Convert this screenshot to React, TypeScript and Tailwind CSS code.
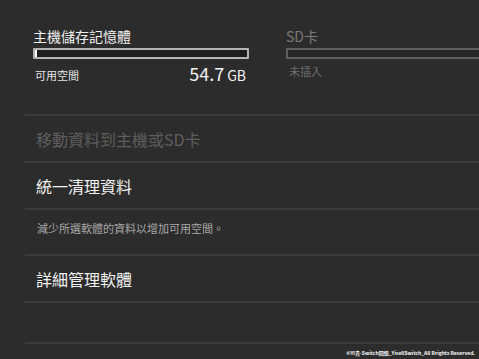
import React from 'react';

const font = '"Noto Sans CJK TC", "Noto Sans", "Liberation Sans", sans-serif';

function StorageRow({ label, dim, children }: { label: string; dim?: boolean; children?: React.ReactNode }) {
  return (
    <div className="border-t-2 border-[#3c3c3c]">
      <div className="h-[45px] flex items-center pl-[11px]">
        <span className={`text-[16px] leading-none ${dim ? 'text-[#5e5e5e]' : 'text-[#f2f2f2]'}`}>{label}</span>
      </div>
      {children}
    </div>
  );
}

export default function App() {
  return (
    <div
      className="relative w-[479px] h-[359px] overflow-hidden bg-[#2c2c2c]"
      style={{ fontFamily: font }}
    >
      {/* storage summary */}
      <div className="flex pt-[27px] h-[114px]">
        <div className="ml-[33px] w-[216px]">
          <div className="text-[14px] leading-[18px] text-[#f0f0f0]">主機儲存記憶體</div>
          <div className="mt-[3px] h-[11px] border-2 border-[#b4b4b4] rounded-[1px] bg-[#1e1e1e] flex">
            <div className="w-[2px] bg-white" />
          </div>
          <div className="mt-[5px] flex items-end justify-between pl-[2px] pr-[3px]">
            <span className="text-[11px] leading-none text-[#e6e6e6] mb-[1px]">可用空間</span>
            <span className="text-[#f2f2f2] leading-none">
              <span className="text-[18px]">54.7</span>
              <span className="text-[14px] ml-[3px]">GB</span>
            </span>
          </div>
        </div>
        <div className="ml-[37px] flex-1">
          <div className="text-[14px] leading-[18px] text-[#7a7a7a]">SD卡</div>
          <div className="mt-[3px] h-[11px] border-2 border-r-0 border-[#5e5e5e] bg-[#262626]" />
          <div className="mt-[7px] pl-[3px] text-[11px] leading-none text-[#6e6e6e]">未插入</div>
        </div>
      </div>

      {/* actions */}
      <div className="ml-[25px]">
        <StorageRow label="移動資料到主機或SD卡" dim />
        <StorageRow label="統一清理資料">
          <div className="border-t-2 border-[#3c3c3c] h-[46px] pl-[12px] pt-[4px]">
            <span className="text-[11px] leading-none text-[#a8a8a8]">減少所選軟體的資料以增加可用空間。</span>
          </div>
        </StorageRow>
        <StorageRow label="詳細管理軟體" />
        <div className="border-t-2 border-[#3c3c3c] h-[41px]" />
        <div className="border-t-2 border-[#3c3c3c]" />
      </div>

      <div className="absolute right-[4px] bottom-[4px] text-[5px] leading-none text-white font-bold">
        ©YI貴-Switch回憶_YisellSwitch_All Rrights Reserved.
      </div>
    </div>
  );
}
